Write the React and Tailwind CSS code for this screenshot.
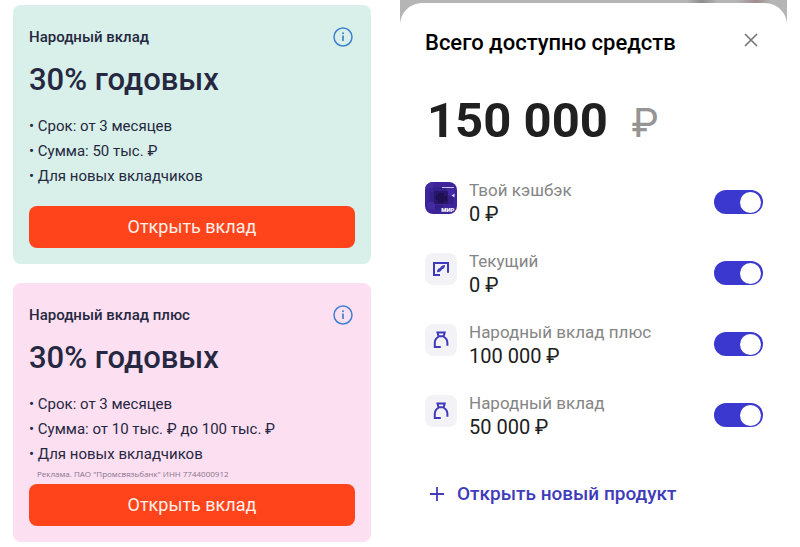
import { useState } from "react";

const DEPOSITS = [
  {
    id: "basic",
    title: "Народный вклад",
    rate: "30% годовых",
    terms: ["Срок: от 3 месяцев", "Сумма: 50 тыс. ₽", "Для новых вкладчиков"],
    tone: "bg-[#d8f0e9]",
  },
  {
    id: "plus",
    title: "Народный вклад плюс",
    rate: "30% годовых",
    terms: ["Срок: от 3 месяцев", "Сумма: от 10 тыс. ₽ до 100 тыс. ₽", "Для новых вкладчиков"],
    note: 'Реклама. ПАО "Промсвязьбанк" ИНН 7744000912',
    tone: "bg-[#fddff2]",
  },
];

const ACCOUNTS = [
  { id: "cashback", name: "Твой кэшбэк", amount: "0 ₽", icon: CardIcon },
  { id: "current", name: "Текущий", amount: "0 ₽", icon: AccountIcon },
  { id: "plus", name: "Народный вклад плюс", amount: "100 000 ₽", icon: BagIcon },
  { id: "basic", name: "Народный вклад", amount: "50 000 ₽", icon: BagIcon },
];

function InfoIcon() {
  return (
    <svg viewBox="0 0 20 20" className="size-5" fill="none" stroke="#4080d0">
      <circle cx="10" cy="10" r="9" strokeWidth="1.5" />
      <path d="M10 8.6v5.4" strokeWidth="1.7" />
      <circle cx="10" cy="6.2" r="1" fill="#4080d0" stroke="none" />
    </svg>
  );
}

function CardIcon() {
  return (
    <svg viewBox="0 0 32 32" className="size-8 shrink-0 rounded-lg">
      <rect width="32" height="32" fill="#3d249b" />
      <path d="M0 0h8v6H0zM22 6h7v7h-7zM3 20h7v7H3z" fill="#452ba3" />
      <path d="M8 5h14v4H8zM4 10h5v10H4zM23 14h5v8h-5zM10 23h8v5h-8z" fill="#342089" />
      <path d="M9 9h14v13H9z" fill="#2a176c" />
      <path d="M13 11h6v3h3v5h-3v2h-6v-3h-2v-5h2z" fill="#1f1052" />
      <path d="M17 5.5h12" stroke="#c9c0f0" strokeWidth="1.2" />
      <path d="M29.5 11.5v4l-3-2z" fill="#ddd6ff" />
      <text x="29.5" y="29.5" textAnchor="end" fontFamily="Roboto, sans-serif" fontSize="6" fontWeight="900" fill="#fff">МИР</text>
    </svg>
  );
}

function AccountIcon() {
  return (
    <svg viewBox="0 0 32 32" className="size-8 shrink-0 rounded-lg bg-[#f3f3f7]" fill="none" stroke="#3f3abb">
      <path d="M15 22H9V10h14v9.8" strokeWidth="2" />
      <path d="M12 19.3c0-2.3 1-3.8 3-4.2.9-1.9 2.3-2.9 5-3.1 0 2.3-1 3.8-3 4.2-.9 1.9-2.3 2.9-5 3.1z" fill="#3f3abb" stroke="none" />
    </svg>
  );
}

function BagIcon() {
  return (
    <svg viewBox="0 0 32 32" className="size-8 shrink-0 rounded-lg bg-[#f3f3f7]" fill="none" stroke="#3f3abb" strokeWidth="2">
      <path d="M12.5 8.5h7.2l-1 3.8h-5.2z" />
      <path d="M13.6 12.8c-2.5 1.1-3.8 3.4-3.8 6.2v4h6" />
      <path d="M18.6 12.8c2.5 1.1 3.8 3.4 3.8 6.2v2.8" />
    </svg>
  );
}

function DepositCard({ deposit }) {
  return (
    <section className={`rounded-lg px-4 pt-[22px] pb-4 text-[#252840] ${deposit.tone}`}>
      <div className="flex items-center justify-between pr-0.5">
        <h2 className="text-[15px] leading-5 font-medium">{deposit.title}</h2>
        <button type="button" aria-label="Подробнее">
          <InfoIcon />
        </button>
      </div>
      <p className="mt-[13px] text-[31px] leading-10 font-medium">{deposit.rate}</p>
      <ul className="mt-[14px] text-[15px] leading-[25px]">
        {deposit.terms.map((term) => (
          <li key={term}>• {term}</li>
        ))}
      </ul>
      <div className="h-[17px] pl-2 font-['Open_Sans',sans-serif] text-[8px] leading-[14px] text-[#85758a]">{deposit.note}</div>
      <button type="button" className="h-[42px] w-full rounded-lg bg-[#ff441b] text-lg text-[#fff0ea]">
        Открыть вклад
      </button>
    </section>
  );
}

function AccountRow({ account, checked, onToggle }) {
  const Icon = account.icon;
  return (
    <li>
      <label className="flex items-center gap-3">
        <span className="mb-2">
          <Icon />
        </span>
        <span className="flex-1 leading-6">
          <span className="block text-[17px] leading-6 text-[#858585]">{account.name}</span>
          <span className="block text-xl leading-6 text-[#202020]">{account.amount}</span>
        </span>
        <input
          type="checkbox"
          role="switch"
          checked={checked}
          onChange={onToggle}
          className="flex h-6 w-[49px] appearance-none items-center rounded-full bg-[#b9b9c4] px-0.5 before:size-[21px] before:rounded-full before:bg-white checked:justify-end checked:bg-[#3b38cf]"
        />
      </label>
    </li>
  );
}

export default function App() {
  const [enabled, setEnabled] = useState({ cashback: true, current: true, plus: true, basic: true });

  function toggle(id) {
    setEnabled((prev) => ({ ...prev, [id]: !prev[id] }));
  }

  return (
    <div className="grid min-h-screen grid-cols-2 bg-white font-[Roboto,sans-serif]">
      <div className="space-y-[19px] pt-[5px] pr-[29px] pb-[5px] pl-[13px]">
        {DEPOSITS.map((deposit) => (
          <DepositCard key={deposit.id} deposit={deposit} />
        ))}
      </div>

      <div className="pr-[13px]">
        <div className="bg-[linear-gradient(90deg,#b5b5b5_74%,#8d8d8d_78%,#b5b5b5_82%,#b5b5b5_87%,#a18c8c_92%,#b5b5b5_96%)] bg-[length:100%_24px] bg-no-repeat pt-[3px]">
          <main className="rounded-t-[22px] bg-white pt-7 pr-6 pl-[25px]">
            <header className="flex items-start justify-between">
              <h1 className="text-[22px] leading-6 font-medium text-black">Всего доступно средств</h1>
              <button type="button" aria-label="Закрыть" className="mr-0.5">
                <svg viewBox="0 0 20 20" className="size-5" fill="none" stroke="#747474" strokeWidth="1.6">
                  <path d="M4 3l12 12M16 3L4 15" />
                </svg>
              </button>
            </header>

            <p className="mt-[38px] flex items-baseline gap-6 pl-0.5 leading-[56px]">
              <span className="text-[49px] font-bold text-[#202020]">150 000</span>
              <span className="text-[40px] text-[#959595]">₽</span>
            </p>

            <ul className="mt-[26px] space-y-[23px]">
              {ACCOUNTS.map((account) => (
                <AccountRow key={account.id} account={account} checked={enabled[account.id]} onToggle={() => toggle(account.id)} />
              ))}
            </ul>

            <button type="button" className="mt-[43px] flex items-center gap-3 pl-1 text-[19px] leading-6 font-medium text-[#403bbb]">
              <svg viewBox="0 0 16 16" className="size-4" fill="none" stroke="currentColor" strokeWidth="1.8">
                <path d="M8 1v14M1 8h14" />
              </svg>
              Открыть новый продукт
            </button>
          </main>
        </div>
      </div>
    </div>
  );
}
